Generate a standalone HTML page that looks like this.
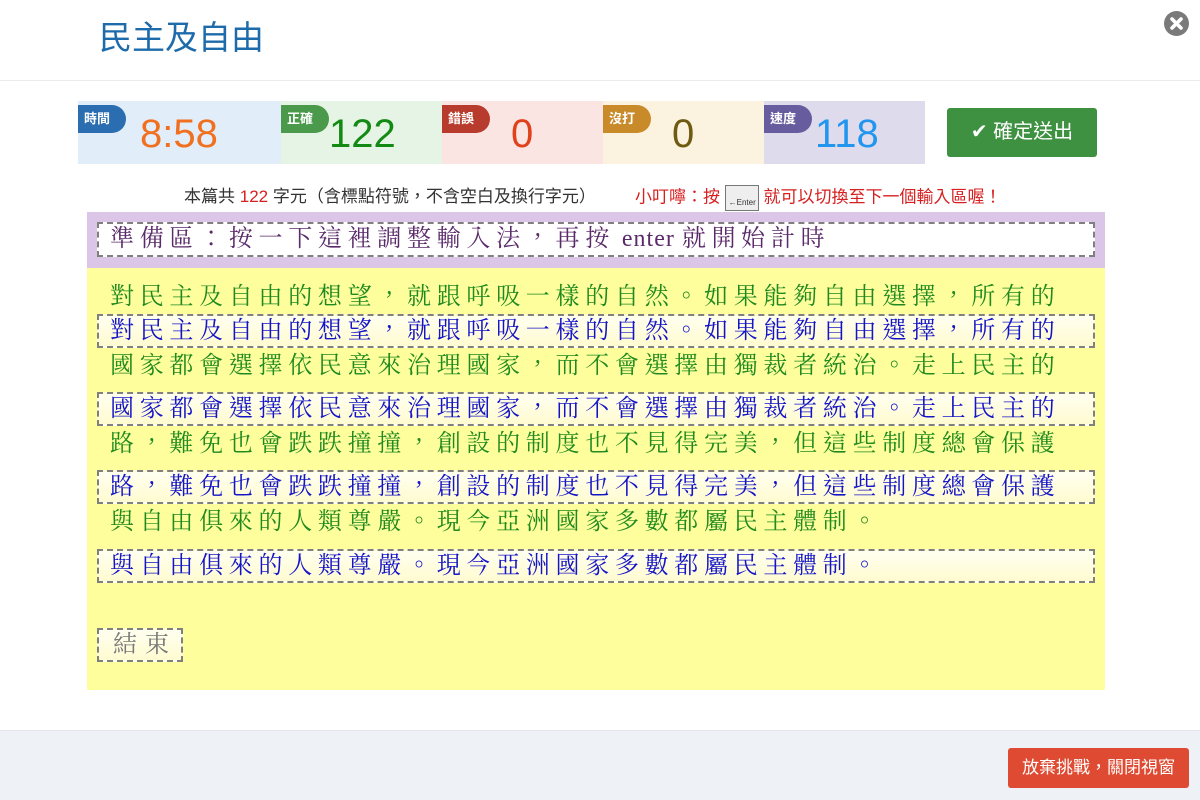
<!DOCTYPE html>
<html><head><meta charset="utf-8"><style>
*{margin:0;padding:0;box-sizing:border-box}
body{width:1200px;height:800px;background:#fff;position:relative;overflow:hidden;font-family:"Liberation Sans","Noto Sans CJK TC",sans-serif}
.a{position:absolute}
.title{left:99px;top:16px;font-size:33px;color:#1e6bab;line-height:44px}
.hline{left:0;top:80px;width:1200px;height:1px;background:#e9ecef}
.seg{top:101px;height:63px}
.badge{top:105px;height:28px;width:48px;border-radius:0 14px 14px 0;color:#fff;font-size:13px;font-weight:bold;line-height:28px;padding-left:6px}
.num{font-size:40px;top:109px;line-height:50px}
.btn{left:947px;top:108px;width:150px;height:49px;background:#3f9142;border-radius:3px;color:#fff;font-size:20px;line-height:49px;text-align:center}
.info{top:185px;font-size:17px;color:#333;line-height:24px;white-space:nowrap}
.serif{font-family:"Liberation Serif","Noto Serif CJK TC",serif;font-size:24px;letter-spacing:5.7px;line-height:32px;white-space:nowrap}
.box{border:2px dashed #808080;background:linear-gradient(#fffff0,#fffbd0)}
.g{color:#1f8a1f;left:110px}
.bl{color:#1515c8}
</style></head><body>
<div class="a title">民主及自由</div>
<div class="a hline"></div>
<svg class="a" style="left:1164px;top:11px" width="25" height="25" viewBox="0 0 25 25"><circle cx="12.5" cy="12.5" r="12.5" fill="#7a7a7a"/><path d="M8 8L17 17M17 8L8 17" stroke="#fff" stroke-width="3.6" stroke-linecap="round"/></svg>

<div class="a seg" style="left:78px;width:203px;background:#e1edf8"></div>
<div class="a seg" style="left:281px;width:161px;background:#e6f4e6"></div>
<div class="a seg" style="left:442px;width:161px;background:#fbe5e3"></div>
<div class="a seg" style="left:603px;width:161px;background:#fcf2e0"></div>
<div class="a seg" style="left:764px;width:161px;background:#dedbed"></div>
<div class="a badge" style="left:78px;background:#2a6db0">時間</div>
<div class="a badge" style="left:281px;background:#4b9a4b">正確</div>
<div class="a badge" style="left:442px;background:#b83c2e">錯誤</div>
<div class="a badge" style="left:603px;background:#c98a2a">沒打</div>
<div class="a badge" style="left:764px;background:#675d9e">速度</div>
<div class="a num" style="left:140px;color:#f07020">8:58</div>
<div class="a num" style="left:329px;color:#138a13">122</div>
<div class="a num" style="left:511px;color:#e0401a">0</div>
<div class="a num" style="left:672px;color:#6e5a10">0</div>
<div class="a num" style="left:815px;color:#2296ee">118</div>
<div class="a btn">✔ 確定送出</div>

<div class="a info" style="left:184px">本篇共 <span style="color:#d62020">122</span> 字元（含標點符號，不含空白及換行字元）</div>
<div class="a info" style="left:635px;color:#d62020">小叮嚀：按 <span style="display:inline-block;width:34px;height:26px;vertical-align:middle;border:1px solid #777;background:#eee;font-size:8px;color:#333;line-height:34px;text-align:right;padding-right:2px">←Enter</span> 就可以切換至下一個輸入區喔！</div>

<div class="a" style="left:87px;top:212px;width:1018px;height:56px;background:#dcc6e8"></div>
<div class="a" style="left:87px;top:268px;width:1018px;height:422px;background:#fffe9c"></div>
<div class="a box serif" style="left:97px;top:222px;width:998px;height:35px;background:#fff;color:#5a2a6a;padding-left:11px;line-height:31px">準備區：按一下這裡調整輸入法，再按<span style="letter-spacing:1px"> enter </span>就開始計時</div>

<div class="a serif g" style="top:281px">對民主及自由的想望，就跟呼吸一樣的自然。如果能夠自由選擇，所有的</div>
<div class="a box serif bl" style="left:97px;top:314px;width:998px;height:34px;padding-left:11px;line-height:30px">對民主及自由的想望，就跟呼吸一樣的自然。如果能夠自由選擇，所有的</div>
<div class="a serif g" style="top:350px">國家都會選擇依民意來治理國家，而不會選擇由獨裁者統治。走上民主的</div>
<div class="a box serif bl" style="left:97px;top:392px;width:998px;height:34px;padding-left:11px;line-height:30px">國家都會選擇依民意來治理國家，而不會選擇由獨裁者統治。走上民主的</div>
<div class="a serif g" style="top:428px">路，難免也會跌跌撞撞，創設的制度也不見得完美，但這些制度總會保護</div>
<div class="a box serif bl" style="left:97px;top:470px;width:998px;height:34px;padding-left:11px;line-height:30px">路，難免也會跌跌撞撞，創設的制度也不見得完美，但這些制度總會保護</div>
<div class="a serif g" style="top:506px">與自由俱來的人類尊嚴。現今亞洲國家多數都屬民主體制。</div>
<div class="a box serif bl" style="left:97px;top:549px;width:998px;height:34px;padding-left:11px;line-height:30px">與自由俱來的人類尊嚴。現今亞洲國家多數都屬民主體制。</div>
<div class="a box serif" style="left:97px;top:628px;width:86px;height:34px;padding-left:14px;line-height:30px;color:#777;letter-spacing:8px">結束</div>

<div class="a" style="left:0;top:730px;width:1200px;height:70px;background:#eef1f6;border-top:1px solid #e3e6ea"></div>
<div class="a" style="left:1008px;top:748px;width:181px;height:40px;background:#de4b32;border-radius:3px;color:#fff;font-size:17px;line-height:40px;text-align:center">放棄挑戰，關閉視窗</div>
</body></html>
